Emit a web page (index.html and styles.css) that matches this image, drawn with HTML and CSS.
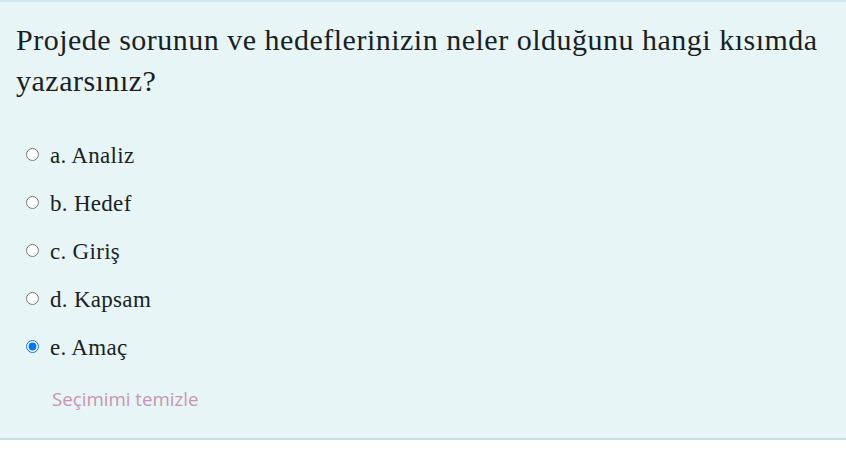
FILE: index.html
```html
<!DOCTYPE html>
<html lang="tr">
<head>
<meta charset="utf-8">
<link rel="stylesheet" href="styles.css">
</head>
<body>
<div class="formulation">
  <div class="qtext">Projede sorunun ve hedeflerinizin neler olduğunu hangi kısımda yazarsınız?</div>
  <div class="answers">
    <label class="answer"><input type="radio" name="q"><span>a. Analiz</span></label>
    <label class="answer"><input type="radio" name="q"><span>b. Hedef</span></label>
    <label class="answer"><input type="radio" name="q"><span>c. Giriş</span></label>
    <label class="answer"><input type="radio" name="q"><span>d. Kapsam</span></label>
    <label class="answer"><input type="radio" name="q" checked><span>e. Amaç</span></label>
  </div>
  <div class="clear">Seçimimi temizle</div>
</div>
</body>
</html>
```
FILE: styles.css
```css
html, body {
  margin: 0;
  padding: 0;
  background: #ffffff;
}
.formulation {
  background: #e7f5f6;
  border-top: 2px solid #cfe9ef;
  border-bottom: 2px solid #c6e0e0;
  height: 436px;
  box-sizing: content-box;
  padding: 0 16px;
  color: #1a1f24;
  font-family: "Liberation Serif", serif;
}
.qtext {
  font-size: 30px;
  line-height: 41px;
  padding-top: 17px;
  letter-spacing: 0.5px;
}
.answers {
  display: flex;
  flex-direction: column;
  margin-top: 31px;
}
.answer {
  display: flex;
  align-items: center;
  height: 48px;
  font-size: 23px;
  letter-spacing: 0.3px;
}
.answer input {
  margin: 0 11px 4px 10px;
  width: 13px;
  height: 13px;
}
.clear {
  font-family: "Open Sans", sans-serif;
  font-size: 18.7px;
  color: #c795b3;
  padding-left: 36px;
  margin-top: 14px;
}
```
